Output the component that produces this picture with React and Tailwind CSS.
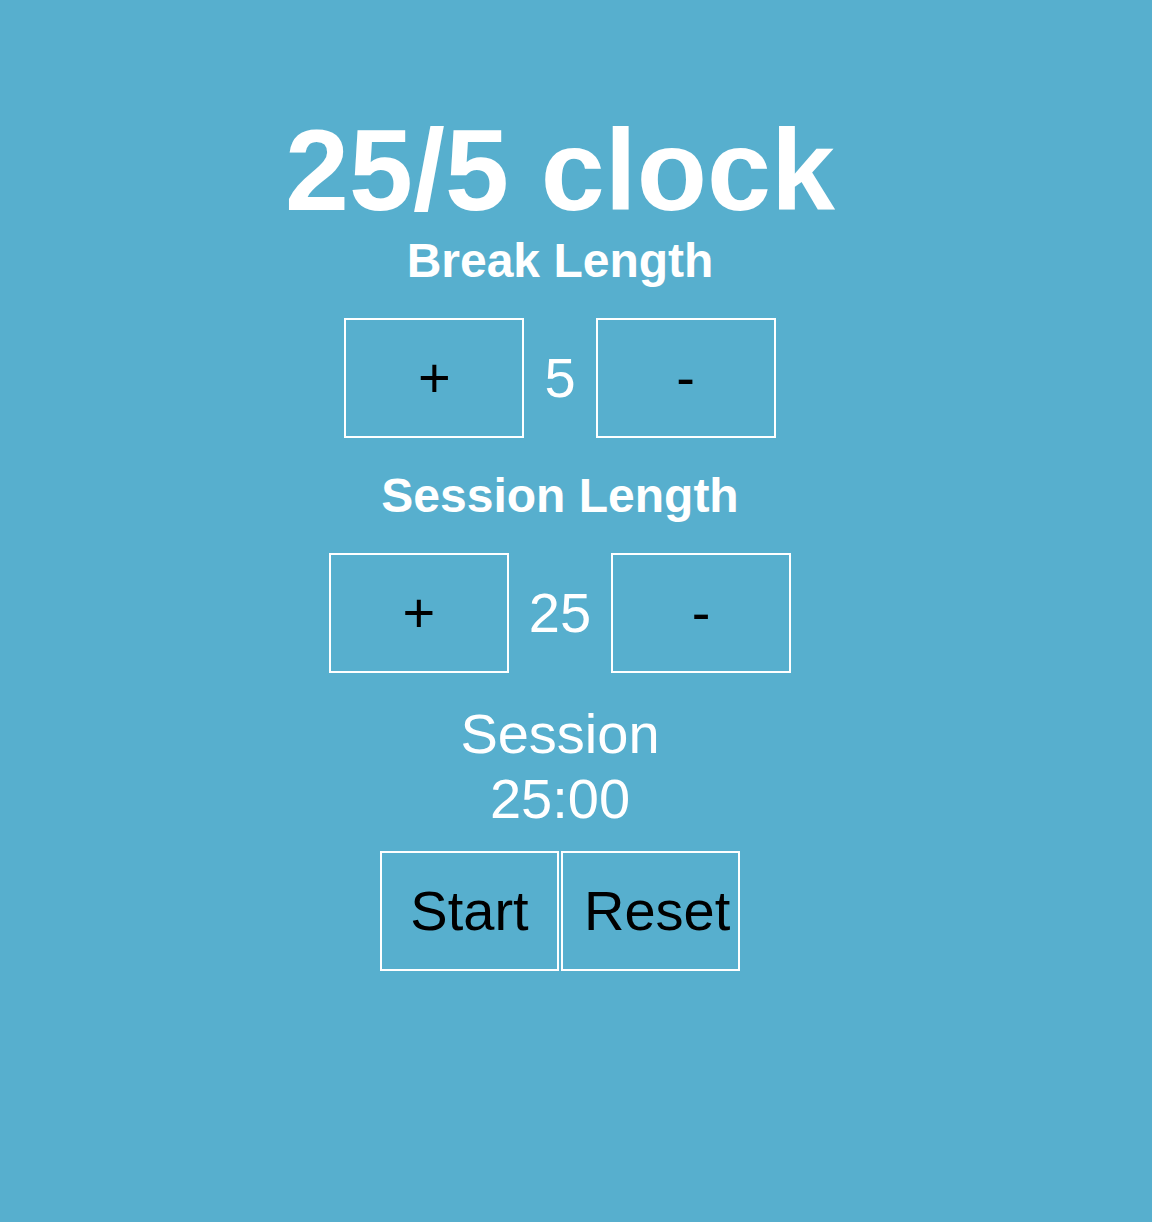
import { useState } from 'react';

function Stepper({ value, onInc, onDec }) {
  return (
    <div className="flex items-center justify-center">
      <button
        onClick={onInc}
        className="w-[180px] h-[120px] border-2 border-white text-black text-[56px] leading-none"
      >
        +
      </button>
      <span className="mx-5 text-white text-[56px] leading-none">{value}</span>
      <button
        onClick={onDec}
        className="w-[180px] h-[120px] border-2 border-white text-black text-[56px] leading-none"
      >
        -
      </button>
    </div>
  );
}

export default function App() {
  const [breakLen, setBreakLen] = useState(5);
  const [sessionLen, setSessionLen] = useState(25);

  return (
    <div className="min-h-screen bg-[#57afce] font-['Liberation_Sans',Arial,sans-serif]">
      <div className="w-[1120px] flex flex-col items-center pt-[113px] text-white">
        <h1 className="text-[115px] leading-none font-bold">25/5 clock</h1>

        <h2 className="mt-[9px] text-[48px] leading-none font-bold">Break Length</h2>
        <div className="mt-[33px]">
          <Stepper
            value={breakLen}
            onInc={() => setBreakLen(b => Math.min(60, b + 1))}
            onDec={() => setBreakLen(b => Math.max(1, b - 1))}
          />
        </div>

        <h2 className="mt-[34px] text-[48px] leading-none font-bold">Session Length</h2>
        <div className="mt-[33px]">
          <Stepper
            value={sessionLen}
            onInc={() => setSessionLen(s => Math.min(60, s + 1))}
            onDec={() => setSessionLen(s => Math.max(1, s - 1))}
          />
        </div>

        <div className="mt-[28px] text-[56px] leading-[65px] text-center">
          <div>Session</div>
          <div>{String(sessionLen).padStart(2, '0')}:00</div>
        </div>

        <div className="mt-[20px] flex gap-[2px]">
          <button className="w-[179px] h-[120px] px-[21px] border-2 border-white text-black text-[56px] leading-none whitespace-nowrap">
            Start
          </button>
          <button className="w-[179px] h-[120px] px-[21px] border-2 border-white text-black text-[56px] leading-none whitespace-nowrap">
            Reset
          </button>
        </div>
      </div>
    </div>
  );
}
